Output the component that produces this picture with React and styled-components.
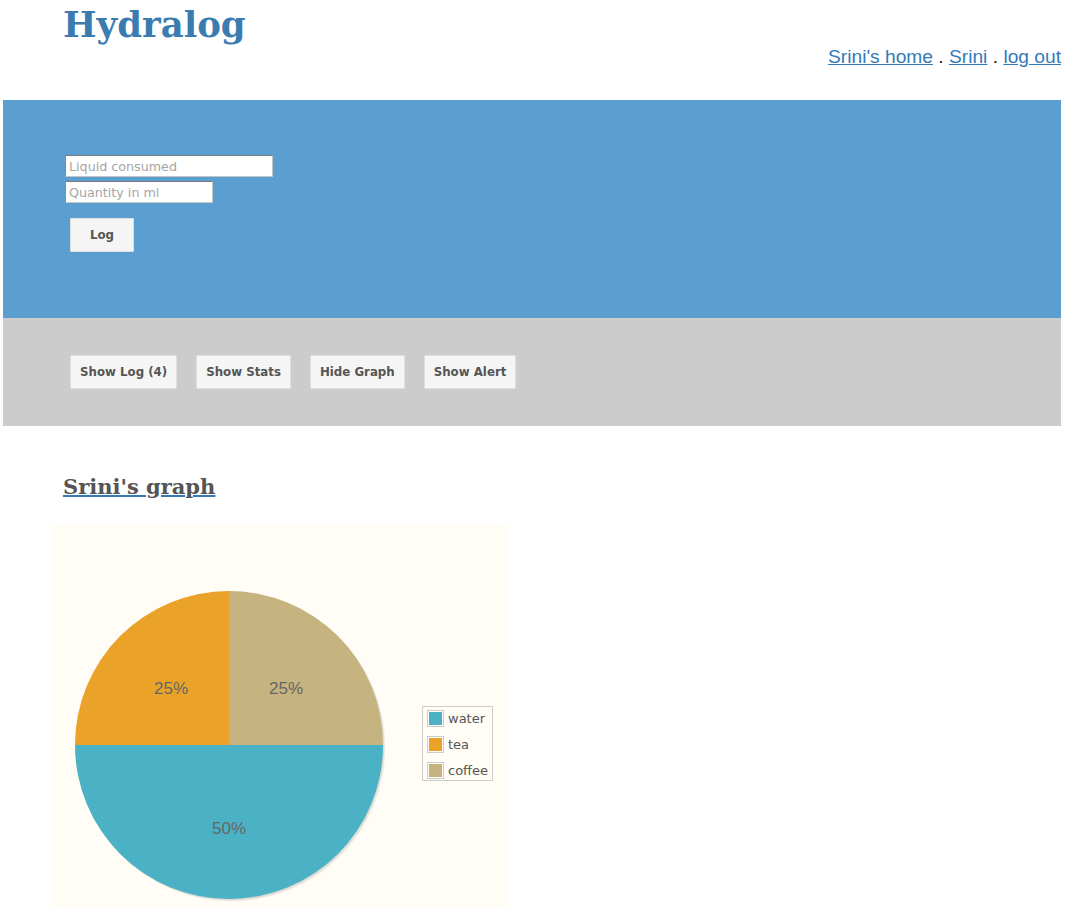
import React from 'react';
import styled, { createGlobalStyle } from 'styled-components';

const GlobalStyle = createGlobalStyle`
    body {
        margin: 0;
        padding: 0 6px 0 3px;
        background: #fff;
        font-family: "Liberation Sans", Arial, sans-serif;
    }
    * { box-sizing: border-box; }
`;

const linkBlue = "#337ab7";
const series = [
    { name: "water", color: "#4bb2c5" },
    { name: "tea", color: "#eaa228" },
    { name: "coffee", color: "#c5b47f" },
];

function App() {
    return (
        <Page>
            <GlobalStyle />
            <Header>
                <Title>Hydralog</Title>
                <Nav>
                    <a href="#">Srini's home</a> . <a href="#">Srini</a> . <a href="#">log out</a>
                </Nav>
            </Header>

            <LogPanel>
                <Input placeholder="Liquid consumed" width={208} />
                <Input placeholder="Quantity in ml" width={148} />
                <Button $wide>Log</Button>
            </LogPanel>

            <ActionBar>
                <Button>Show Log (4)</Button>
                <Button>Show Stats</Button>
                <Button>Hide Graph</Button>
                <Button>Show Alert</Button>
            </ActionBar>

            <GraphSection>
                <GraphTitle><a href="#">Srini's graph</a></GraphTitle>
                <Chart>
                    <svg width="457" height="386" viewBox="0 0 457 386">
                        {[3, 2, 1].map((o) => (
                            <circle key={o} cx={178 + o * 0.8} cy={221 + o * 0.8} r="154" fill="rgba(0,0,0,0.05)" />
                        ))}
                        <path d="M178,221 L332,221 A154,154 0 0 1 24,221 Z" fill="#4bb2c5" />
                        <path d="M178,221 L24,221 A154,154 0 0 1 178,67 Z" fill="#eaa228" />
                        <path d="M178,221 L178,67 A154,154 0 0 1 332,221 Z" fill="#c5b47f" />
                        <PieLabel x="120" y="170">25%</PieLabel>
                        <PieLabel x="235" y="170">25%</PieLabel>
                        <PieLabel x="178" y="310">50%</PieLabel>
                    </svg>
                    <Legend>
                        {series.map((s) => (
                            <LegendRow key={s.name}>
                                <Swatch><span style={{ background: s.color }} /></Swatch>
                                {s.name}
                            </LegendRow>
                        ))}
                    </Legend>
                </Chart>
            </GraphSection>
        </Page>
    );
}

const Page = styled.div`
    width: 100%;
`;

const Header = styled.div`
    height: 100px;
    display: flex;
    justify-content: space-between;
    padding-left: 60px;
`;

const Title = styled.h1`
    margin: 0;
    padding-top: 2px;
    font-family: "DejaVu Serif", Georgia, serif;
    font-weight: bold;
    font-size: 35.5px;
    line-height: 46px;
    color: #3a7cb0;
`;

const Nav = styled.div`
    padding-top: 45px;
    font-size: 19.2px;
    line-height: 23px;
    color: #222;
    a:link, a:visited {
        color: ${linkBlue};
        text-decoration: underline;
    }
`;

const LogPanel = styled.div`
    height: 218px;
    background: #5a9fd0;
    padding: 55px 0 0 62px;
    display: flex;
    flex-direction: column;
    align-items: flex-start;
    gap: 4px;
    button {
        margin: 11px 0 0 5px;
    }
`;

const Input = styled.input.attrs({ type: "text" })`
    width: ${(p) => p.width}px;
    height: 22px;
    border: 1px solid #8a8a8a;
    border-color: #7a7a7a #c4c4c4 #c4c4c4 #8a8a8a;
    background: #fff;
    padding: 0 3px;
    font-family: "DejaVu Sans", "Lucida Grande", sans-serif;
    font-size: 12.7px;
    &::placeholder {
        color: #a5a5a5;
    }
`;

const Button = styled.button`
    height: 34px;
    padding: 0 ${(p) => (p.$wide ? 19 : 9)}px;
    background: #f5f5f5;
    border: 1px solid #dedede;
    border-radius: 1px;
    color: #555;
    font-family: "DejaVu Sans", "Lucida Grande", sans-serif;
    font-weight: bold;
    font-size: 11.8px;
`;

const ActionBar = styled.div`
    height: 108px;
    background: #cccccc;
    padding: 37px 0 0 67px;
    display: flex;
    align-items: flex-start;
    gap: 19px;
`;

const GraphSection = styled.div`
    padding: 47px 0 0 48px;
`;

const GraphTitle = styled.h2`
    margin: 0 0 23px 12px;
    font-family: "DejaVu Serif", Georgia, serif;
    font-size: 21px;
    line-height: 28px;
    a:link, a:visited {
        color: #555;
        text-decoration: underline;
        text-decoration-color: ${linkBlue};
        text-decoration-thickness: 2px;
    }
`;

const Chart = styled.div`
    position: relative;
    width: 457px;
    height: 386px;
    background: #fffdf6;
    svg { display: block; }
`;

const PieLabel = styled.text`
    font-family: "Liberation Sans", Arial, sans-serif;
    font-size: 17px;
    fill: #666;
    text-anchor: middle;
`;

const Legend = styled.div`
    position: absolute;
    left: 371px;
    top: 182px;
    width: 71px;
    height: 75px;
    border: 1px solid #cccccc;
    padding: 2px 0 0 4px;
    display: flex;
    flex-direction: column;
    gap: 8px;
`;

const LegendRow = styled.div`
    display: flex;
    align-items: center;
    gap: 4px;
    height: 18px;
    font-family: "DejaVu Sans", sans-serif;
    font-size: 13px;
    color: #555;
`;

const Swatch = styled.div`
    width: 17px;
    height: 17px;
    border: 1px solid #ccc;
    padding: 1px;
    span {
        display: block;
        width: 100%;
        height: 100%;
    }
`;

export default App;
